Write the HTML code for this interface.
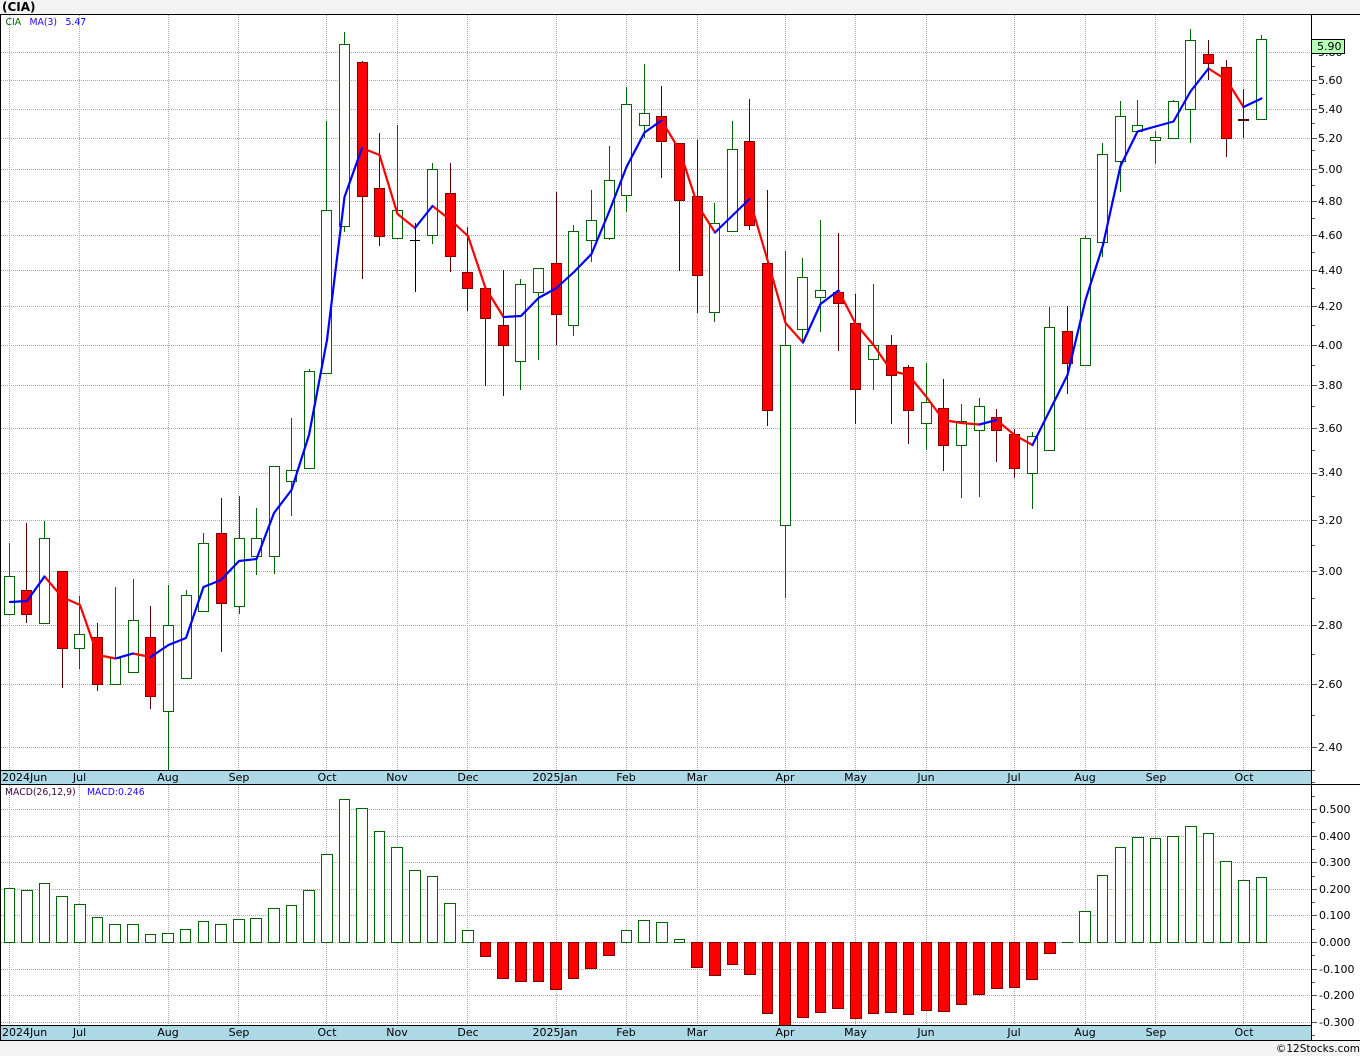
<!DOCTYPE html>
<html><head><meta charset="utf-8"><title>CIA</title>
<style>
html,body{margin:0;padding:0;background:#fff}
svg{display:block}
text{font-family:"DejaVu Sans","Liberation Sans",sans-serif;font-size:11px;fill:#000}
.s{font-size:9.3px}
</style></head><body>
<svg width="1360" height="1056" viewBox="0 0 1360 1056" xmlns="http://www.w3.org/2000/svg">
<rect width="1360" height="1056" fill="#fff"/>
<rect width="1360" height="14" fill="#f3f3f3"/>
<rect y="1041" width="1360" height="15" fill="#f3f3f3"/>
<!-- grid -->
<g shape-rendering="crispEdges" stroke="#a9a9a9" stroke-width="1" stroke-dasharray="1 1" fill="none">
<path d="M1 52.5H1311M1 80.5H1311M1 109.5H1311M1 138.5H1311M1 169.5H1311M1 201.5H1311M1 235.5H1311M1 270.5H1311M1 306.5H1311M1 345.5H1311M1 385.5H1311M1 428.5H1311M1 473.5H1311M1 520.5H1311M1 571.5H1311M1 625.5H1311M1 684.5H1311M1 747.5H1311"/>
<path d="M1 809.5H1311M1 836.5H1311M1 862.5H1311M1 889.5H1311M1 915.5H1311M1 942.5H1311M1 969.5H1311M1 995.5H1311M1 1022.5H1311"/>
<path d="M9.5 15V770M79.5 15V770M168.5 15V770M238.5 15V770M326.5 15V770M397.5 15V770M467.5 15V770M556.5 15V770M626.5 15V770M697.5 15V770M785.5 15V770M855.5 15V770M926.5 15V770M1014.5 15V770M1085.5 15V770M1155.5 15V770M1243.5 15V770"/>
<path d="M9.5 785V1025M79.5 785V1025M168.5 785V1025M238.5 785V1025M326.5 785V1025M397.5 785V1025M467.5 785V1025M556.5 785V1025M626.5 785V1025M697.5 785V1025M785.5 785V1025M855.5 785V1025M926.5 785V1025M1014.5 785V1025M1085.5 785V1025M1155.5 785V1025M1243.5 785V1025"/>
</g>
<!-- wicks -->
<g shape-rendering="crispEdges" fill="none" stroke-width="1">
<path stroke="#006400" d="M9.5 543V614M44.5 521V623M79.5 596V669M115.5 587V684M133.5 579V672M168.5 585V770M186.5 590V678M203.5 533V611M239.5 496V614M256.5 508V575M274.5 466V574M291.5 418V516M309.5 369V468M326.5 121V373M344.5 32V232M397.5 125V238M432.5 163V244M520.5 279V390M538.5 268V360M573.5 225V336M591.5 190V262M609.5 146V240M626.5 87V212M644.5 64V138M714.5 203V322M732.5 121V231M785.5 251V598M802.5 258V342M820.5 220V332M873.5 284V390M926.5 363V450M961.5 404V498M979.5 398V497M1032.5 432V509M1049.5 307V450M1085.5 235V365M1102.5 143V257M1120.5 101V192M1137.5 100V131M1155.5 131V164M1173.5 100V138M1190.5 29V143M1261.5 35V119"/>
<path stroke="#570000" d="M26.5 523V623M62.5 571V688M97.5 623V691M150.5 606V709M221.5 498V652M362.5 61V279M379.5 133V246M450.5 163V272M467.5 227V311M485.5 288V386M503.5 270V396M556.5 192V345M661.5 86V178M679.5 143V271M697.5 140V313M749.5 99V230M767.5 190V426M838.5 233V351M855.5 294V424M891.5 335V424M908.5 365V444M943.5 379V471M996.5 409V462M1014.5 429V478M1067.5 306V394M1208.5 40V80M1226.5 60V157M1243.5 89V138"/>
<path stroke="#000" d="M415.5 223V292M410 240.5H420"/>
<path stroke="#570000" stroke-width="2" d="M1238 120H1249"/>
</g>
<!-- green bodies -->
<path shape-rendering="crispEdges" fill="#fff" stroke="#006400" stroke-width="1" d="M4.5 576.5h10V614.5h-10zM39.5 538.5h10V623.5h-10zM74.5 634.5h10V648.5h-10zM110.5 658.5h10V684.5h-10zM128.5 620.5h10V672.5h-10zM163.5 625.5h10V711.5h-10zM181.5 595.5h10V678.5h-10zM198.5 543.5h10V611.5h-10zM234.5 538.5h10V606.5h-10zM251.5 538.5h10V556.5h-10zM269.5 466.5h10V556.5h-10zM286.5 470.5h10V481.5h-10zM304.5 371.5h10V468.5h-10zM321.5 210.5h10V373.5h-10zM339.5 44.5h10V226.5h-10zM392.5 210.5h10V238.5h-10zM427.5 169.5h10V235.5h-10zM515.5 284.5h10V361.5h-10zM533.5 268.5h10V292.5h-10zM568.5 231.5h10V325.5h-10zM586.5 220.5h10V240.5h-10zM604.5 180.5h10V238.5h-10zM621.5 104.5h10V195.5h-10zM639.5 113.5h10V125.5h-10zM709.5 223.5h10V312.5h-10zM727.5 149.5h10V231.5h-10zM780.5 345.5h10V525.5h-10zM797.5 277.5h10V329.5h-10zM815.5 290.5h10V297.5h-10zM868.5 345.5h10V359.5h-10zM921.5 402.5h10V423.5h-10zM956.5 421.5h10V445.5h-10zM974.5 406.5h10V430.5h-10zM1027.5 436.5h10V473.5h-10zM1044.5 327.5h10V450.5h-10zM1080.5 238.5h10V365.5h-10zM1097.5 154.5h10V242.5h-10zM1115.5 116.5h10V161.5h-10zM1132.5 125.5h10V131.5h-10zM1150.5 137.5h10V140.5h-10zM1168.5 101.5h10V138.5h-10zM1185.5 40.5h10V109.5h-10zM1256.5 39.5h10V119.5h-10z"/>
<!-- red bodies -->
<path shape-rendering="crispEdges" fill="#f00" stroke="#800000" stroke-width="1" d="M21.5 590.5h10V614.5h-10zM57.5 571.5h10V648.5h-10zM92.5 637.5h10V684.5h-10zM145.5 637.5h10V696.5h-10zM216.5 533.5h10V603.5h-10zM357.5 62.5h10V196.5h-10zM374.5 188.5h10V236.5h-10zM445.5 193.5h10V256.5h-10zM462.5 272.5h10V288.5h-10zM480.5 288.5h10V318.5h-10zM498.5 325.5h10V345.5h-10zM551.5 263.5h10V314.5h-10zM656.5 116.5h10V141.5h-10zM674.5 143.5h10V200.5h-10zM692.5 196.5h10V275.5h-10zM744.5 141.5h10V225.5h-10zM762.5 263.5h10V410.5h-10zM833.5 292.5h10V303.5h-10zM850.5 323.5h10V389.5h-10zM886.5 345.5h10V375.5h-10zM903.5 367.5h10V410.5h-10zM938.5 408.5h10V445.5h-10zM991.5 417.5h10V430.5h-10zM1009.5 434.5h10V468.5h-10zM1062.5 331.5h10V363.5h-10zM1203.5 54.5h10V63.5h-10zM1221.5 67.5h10V138.5h-10z"/>
<!-- moving average -->
<g fill="none" stroke-width="2.2" stroke-linejoin="round" stroke-linecap="round">
<g stroke="#f00">
<polyline points="44.5,576.5 62,597 80,605 97.5,655 115.5,658.5"/>
<polyline points="133,653.5 150.5,657"/>
<polyline points="362,148 379.5,155 397.5,214 415,228"/>
<polyline points="432.5,206 450.5,220 468,236 485.5,288 503.5,317"/>
<polyline points="661.5,120.5 679.5,150 697.5,205 715,232.5"/>
<polyline points="749.5,199 767.5,260 785.5,323 803,342.5"/>
<polyline points="838.5,290.5 855.5,323.5 873.5,345 891.5,371 908.5,375 926.5,397 943.5,420 961.5,423 979.5,424.5"/>
<polyline points="996.5,420 1014.5,435 1032.5,445"/>
<polyline points="1208.5,68.5 1226.5,80 1243.5,107"/>
</g>
<g stroke="#00f">
<polyline points="10,602 27,601 44.5,576.5"/>
<polyline points="115.5,658.5 133,653.5"/>
<polyline points="150.5,657 168.5,645 186,638 203.5,587 221,580 239,561 256.5,559 274,513 291.5,490 309,435 327,340 344.5,197 362,148"/>
<polyline points="415,228 432.5,206"/>
<polyline points="503.5,317 521,316 538.5,298 556.5,288 574,272 591.5,254 609,212 626.5,167 644.5,132.5 661.5,120.5"/>
<polyline points="715,232.5 732.5,215.5 749.5,199"/>
<polyline points="803,342.5 820.5,304 838.5,290.5"/>
<polyline points="979.5,424.5 996.5,420"/>
<polyline points="1032.5,445 1050,410 1067.5,375 1085.5,300 1103,245 1120.5,166 1137.5,131.5 1155.5,126.5 1173.5,121.5 1190.5,91.5 1208.5,68.5"/>
<polyline points="1243.5,107 1261.5,98.5"/>
</g>
</g>
<!-- MACD green -->
<path shape-rendering="crispEdges" fill="#fff" stroke="#006400" stroke-width="1" d="M4.5 888.5h10V942.5h-10zM21.5 890.5h11V942.5h-11zM39.5 883.5h10V942.5h-10zM56.5 896.5h11V942.5h-11zM74.5 904.5h11V942.5h-11zM92.5 917.5h10V942.5h-10zM109.5 924.5h11V942.5h-11zM127.5 924.5h11V942.5h-11zM145.5 934.5h10V942.5h-10zM162.5 933.5h11V942.5h-11zM180.5 929.5h10V942.5h-10zM198.5 921.5h10V942.5h-10zM215.5 924.5h11V942.5h-11zM233.5 919.5h11V942.5h-11zM250.5 918.5h11V942.5h-11zM268.5 908.5h11V942.5h-11zM286.5 905.5h10V942.5h-10zM303.5 890.5h11V942.5h-11zM321.5 854.5h11V942.5h-11zM339.5 799.5h10V942.5h-10zM356.5 808.5h11V942.5h-11zM374.5 831.5h10V942.5h-10zM391.5 847.5h11V942.5h-11zM409.5 870.5h11V942.5h-11zM427.5 876.5h10V942.5h-10zM444.5 903.5h11V942.5h-11zM462.5 930.5h11V942.5h-11zM621.5 930.5h10V942.5h-10zM638.5 920.5h11V942.5h-11zM656.5 922.5h11V942.5h-11zM674.5 939.5h10V942.5h-10zM1079.5 911.5h11V942.5h-11zM1097.5 875.5h10V942.5h-10zM1115.5 847.5h10V942.5h-10zM1132.5 837.5h11V942.5h-11zM1150.5 838.5h10V942.5h-10zM1167.5 836.5h11V942.5h-11zM1185.5 826.5h11V942.5h-11zM1203.5 833.5h10V942.5h-10zM1220.5 861.5h11V942.5h-11zM1238.5 880.5h11V942.5h-11zM1256.5 877.5h10V942.5h-10z"/>
<path shape-rendering="crispEdges" fill="none" stroke="#006400" d="M1062 942.5h11"/>
<!-- MACD red -->
<path shape-rendering="crispEdges" fill="#f00" stroke="#800000" stroke-width="1" d="M480.5 942.5h10V956.5h-10zM497.5 942.5h11V978.5h-11zM515.5 942.5h11V981.5h-11zM533.5 942.5h10V981.5h-10zM550.5 942.5h11V989.5h-11zM568.5 942.5h10V978.5h-10zM585.5 942.5h11V968.5h-11zM603.5 942.5h11V955.5h-11zM691.5 942.5h11V967.5h-11zM709.5 942.5h11V975.5h-11zM727.5 942.5h10V964.5h-10zM744.5 942.5h11V974.5h-11zM762.5 942.5h10V1013.5h-10zM779.5 942.5h11V1025.5h-11zM797.5 942.5h11V1017.5h-11zM815.5 942.5h10V1012.5h-10zM832.5 942.5h11V1008.5h-11zM850.5 942.5h11V1018.5h-11zM868.5 942.5h10V1013.5h-10zM885.5 942.5h11V1012.5h-11zM903.5 942.5h10V1014.5h-10zM921.5 942.5h10V1010.5h-10zM938.5 942.5h11V1011.5h-11zM956.5 942.5h10V1004.5h-10zM973.5 942.5h11V994.5h-11zM991.5 942.5h11V988.5h-11zM1009.5 942.5h10V987.5h-10zM1026.5 942.5h11V979.5h-11zM1044.5 942.5h11V953.5h-11z"/>
<!-- date bars -->
<rect x="1" y="771" width="1310" height="13" fill="#add8e6"/>
<rect x="1" y="1026" width="1310" height="14" fill="#add8e6"/>
<!-- frame -->
<g shape-rendering="crispEdges" stroke="#000" stroke-width="1" fill="none">
<path d="M0 14.5H1360M1 770.5H1311M0 784.5H1360M1 1025.5H1311M0 1040.5H1360M0.5 14V1041M1311.5 14V1041"/>
</g>
<!-- axis ticks -->
<g shape-rendering="crispEdges" stroke="#555" stroke-width="1" fill="none">
<path d="M1312 80.5h5M1312 109.5h5M1312 138.5h5M1312 169.5h5M1312 201.5h5M1312 235.5h5M1312 270.5h5M1312 306.5h5M1312 345.5h5M1312 385.5h5M1312 428.5h5M1312 473.5h5M1312 520.5h5M1312 571.5h5M1312 625.5h5M1312 684.5h5M1312 747.5h5"/>
<path d="M1312 66.5h3M1312 94.5h3M1312 123.5h3M1312 150.5h3M1312 185.5h3M1312 218.5h3M1312 252.5h3M1312 288.5h3M1312 325.5h3M1312 365.5h3M1312 406.5h3M1312 450.5h3M1312 496.5h3M1312 545.5h3M1312 598.5h3M1312 654.5h3M1312 715.5h3M1312 770.5h3M1312 782.5h3"/>
<path d="M1312 809.5h5M1312 836.5h5M1312 862.5h5M1312 889.5h5M1312 915.5h5M1312 942.5h5M1312 969.5h5M1312 995.5h5M1312 1022.5h5"/>
<path d="M1312 796.5h3M1312 822.5h3M1312 849.5h3M1312 876.5h3M1312 902.5h3M1312 929.5h3M1312 955.5h3M1312 982.5h3M1312 1009.5h3M1312 1035.5h3"/>
</g>
<!-- price labels -->
<text x="1318" y="56">5.80</text>
<rect x="1311.5" y="39.5" width="33" height="14" fill="#b8ffb8" stroke="#000" shape-rendering="crispEdges"/>
<text x="1317" y="50">5.90</text>
<text x="1318" y="84">5.60</text>
<text x="1318" y="113">5.40</text>
<text x="1318" y="142">5.20</text>
<text x="1318" y="173">5.00</text>
<text x="1318" y="205">4.80</text>
<text x="1318" y="239">4.60</text>
<text x="1318" y="274">4.40</text>
<text x="1318" y="310">4.20</text>
<text x="1318" y="349">4.00</text>
<text x="1318" y="389">3.80</text>
<text x="1318" y="432">3.60</text>
<text x="1318" y="476">3.40</text>
<text x="1318" y="524">3.20</text>
<text x="1318" y="575">3.00</text>
<text x="1318" y="629">2.80</text>
<text x="1318" y="688">2.60</text>
<text x="1318" y="751">2.40</text>
<!-- MACD labels -->
<text x="1319" y="813">0.500</text>
<text x="1319" y="840">0.400</text>
<text x="1319" y="866">0.300</text>
<text x="1319" y="893">0.200</text>
<text x="1319" y="919">0.100</text>
<text x="1319" y="946">0.000</text>
<text x="1319" y="973">-0.100</text>
<text x="1319" y="999">-0.200</text>
<text x="1319" y="1026">-0.300</text>
<!-- date labels -->
<g>
<text x="2" y="781">2024Jun</text>
<text x="79.5" y="781" text-anchor="middle">Jul</text>
<text x="168" y="781" text-anchor="middle">Aug</text>
<text x="239" y="781" text-anchor="middle">Sep</text>
<text x="327" y="781" text-anchor="middle">Oct</text>
<text x="397" y="781" text-anchor="middle">Nov</text>
<text x="468" y="781" text-anchor="middle">Dec</text>
<text x="555" y="781" text-anchor="middle">2025Jan</text>
<text x="626" y="781" text-anchor="middle">Feb</text>
<text x="697" y="781" text-anchor="middle">Mar</text>
<text x="785" y="781" text-anchor="middle">Apr</text>
<text x="855.5" y="781" text-anchor="middle">May</text>
<text x="926" y="781" text-anchor="middle">Jun</text>
<text x="1014" y="781" text-anchor="middle">Jul</text>
<text x="1085" y="781" text-anchor="middle">Aug</text>
<text x="1156" y="781" text-anchor="middle">Sep</text>
<text x="1244" y="781" text-anchor="middle">Oct</text>
<text x="2" y="1036">2024Jun</text>
<text x="79.5" y="1036" text-anchor="middle">Jul</text>
<text x="168" y="1036" text-anchor="middle">Aug</text>
<text x="239" y="1036" text-anchor="middle">Sep</text>
<text x="327" y="1036" text-anchor="middle">Oct</text>
<text x="397" y="1036" text-anchor="middle">Nov</text>
<text x="468" y="1036" text-anchor="middle">Dec</text>
<text x="555" y="1036" text-anchor="middle">2025Jan</text>
<text x="626" y="1036" text-anchor="middle">Feb</text>
<text x="697" y="1036" text-anchor="middle">Mar</text>
<text x="785" y="1036" text-anchor="middle">Apr</text>
<text x="855.5" y="1036" text-anchor="middle">May</text>
<text x="926" y="1036" text-anchor="middle">Jun</text>
<text x="1014" y="1036" text-anchor="middle">Jul</text>
<text x="1085" y="1036" text-anchor="middle">Aug</text>
<text x="1156" y="1036" text-anchor="middle">Sep</text>
<text x="1244" y="1036" text-anchor="middle">Oct</text>
</g>
<!-- headings -->
<text x="2" y="11" style="font-weight:bold;font-size:12px">(CIA)</text>
<text class="s" x="5.5" y="25" style="fill:#006400">CIA</text>
<text class="s" x="29.5" y="25" style="fill:#2000ff">MA(3)</text>
<text class="s" x="65.5" y="25" style="fill:#0000ff">5.47</text>
<text class="s" x="5" y="795" style="fill:#400040">MACD(26,12,9)</text>
<text class="s" x="87" y="795" style="fill:#2000ff">MACD:0.246</text>
<text x="1360" y="1052" text-anchor="end" style="font-size:10.5px">©12Stocks.com</text>
</svg>
</body></html>
